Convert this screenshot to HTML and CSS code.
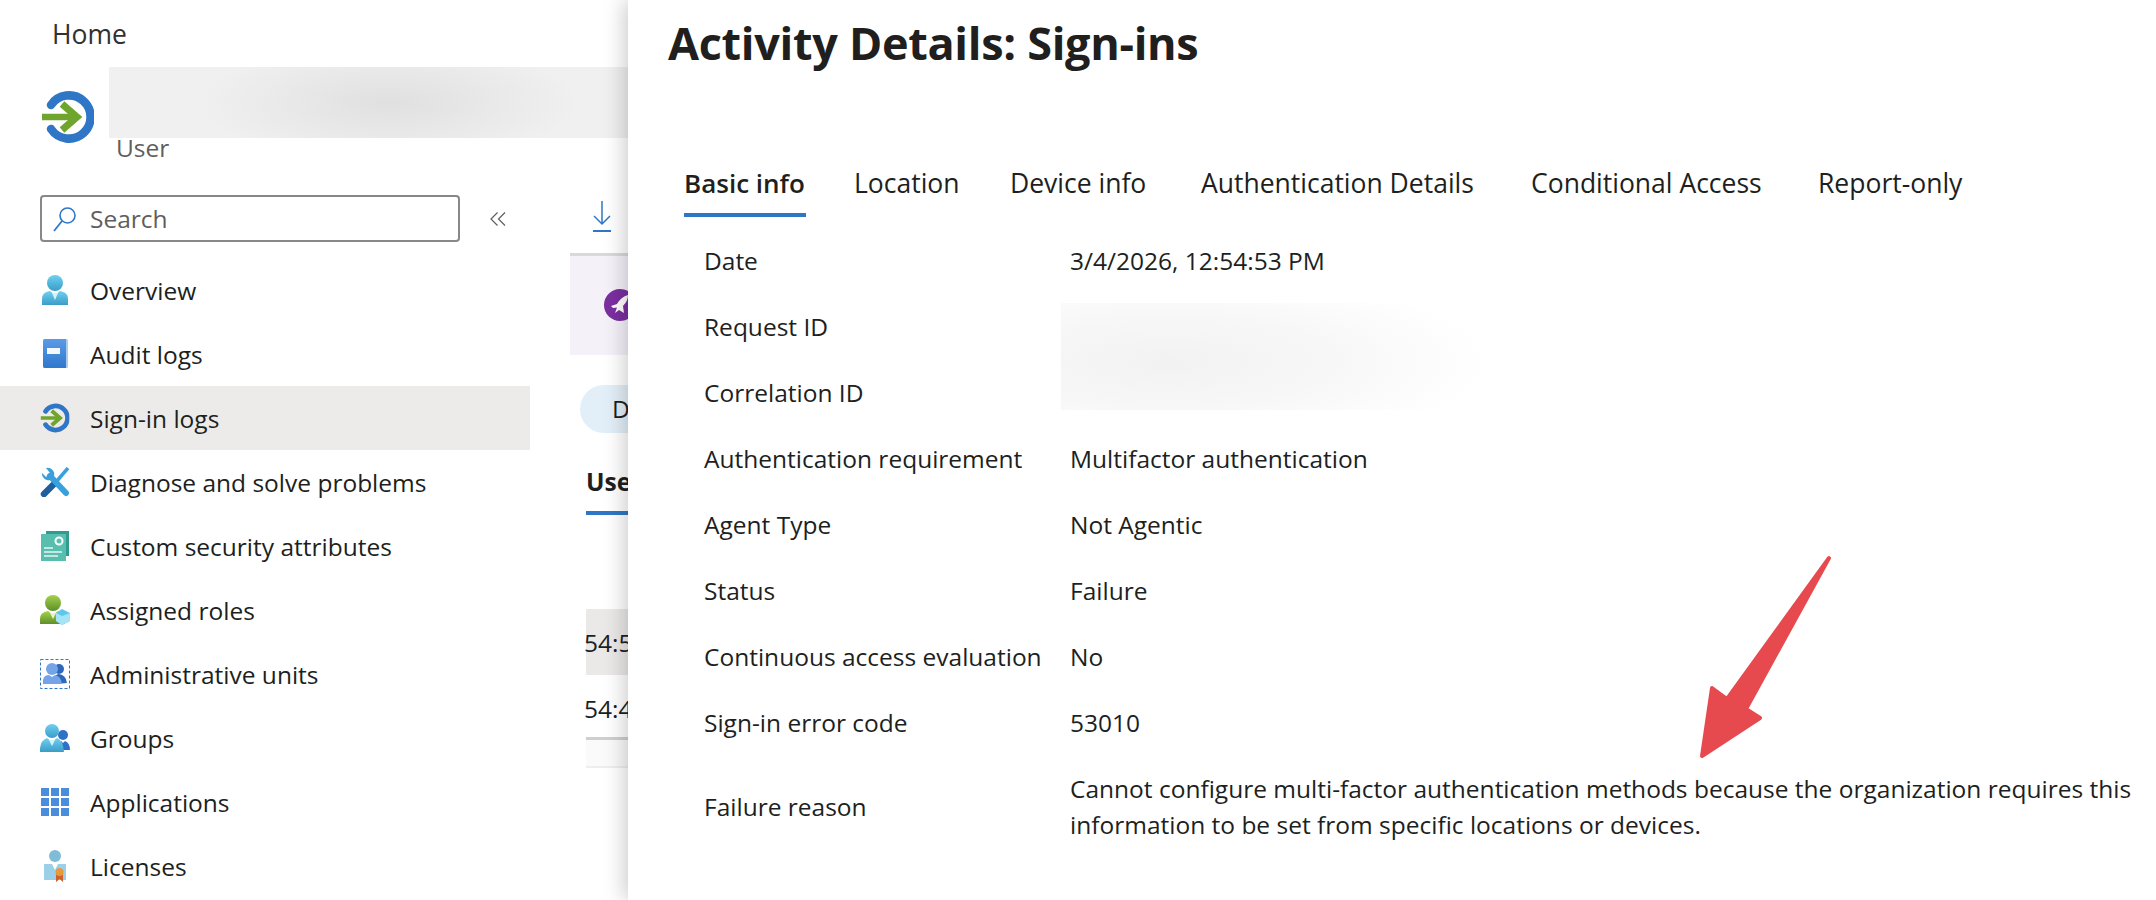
FILE: index.html
```html
<!DOCTYPE html>
<html lang="en">
<head>
  <meta charset="UTF-8">
  <title>Activity Details: Sign-ins</title>
  <link rel="stylesheet" href="styles.css">
</head>
<body>
  <svg class="defs" width="0" height="0">
    <defs>
      <linearGradient id="sky" x1="0" y1="0" x2="0" y2="1"><stop offset="0" stop-color="#6fd0f2"/><stop offset="1" stop-color="#3b9cc6"/></linearGradient>
      <linearGradient id="leaf" x1="0" y1="0" x2="0" y2="1"><stop offset="0" stop-color="#a4d24a"/><stop offset="1" stop-color="#5e8f2a"/></linearGradient>
      <linearGradient id="blue" x1="0" y1="0" x2="0" y2="1"><stop offset="0" stop-color="#5c9ae6"/><stop offset="1" stop-color="#2f78cc"/></linearGradient>
      <symbol id="signin" viewBox="0 0 52 54">
        <path d="M9 15A21.6 21.6 0 1 1 9 39" fill="none" stroke="#2f76c6" stroke-width="8.5" stroke-linecap="round"/>
        <path d="M0 27H35" fill="none" stroke="#6fa52c" stroke-width="6.5"/>
        <path d="M20 14L35 27L20 40" fill="none" stroke="#6fa52c" stroke-width="7"/>
      </symbol>
    </defs>
  </svg>

  <div class="page">
    <aside class="sidebar">
      <div class="home">Home</div>
      <div class="resource">
        <svg class="resource-icon" width="52" height="54"><use href="#signin"/></svg>
        <div class="resource-text">
          <div class="redacted-name"></div>
          <div class="resource-type">User</div>
        </div>
      </div>
      <div class="search-row">
        <div class="search-box">
          <svg width="24" height="26" viewBox="0 0 24 26"><circle cx="14.5" cy="9.5" r="7.5" fill="none" stroke="#2f76c6" stroke-width="1.6"/><path d="M9 15L1 25" stroke="#2f76c6" stroke-width="1.8"/></svg>
          <span>Search</span>
        </div>
        <svg class="collapse" width="16" height="14" viewBox="0 0 16 14"><path d="M7.5 0.5L1 7L7.5 13.5M15 0.5L8.500 7L15 13.5" fill="none" stroke="#605e5c" stroke-width="1.2"/></svg>
      </div>
      <nav class="nav">
        <a class="nav-item">
          <svg width="28" height="30" viewBox="0 0 28 30"><circle cx="14" cy="8" r="8" fill="url(#sky)"/><path d="M1 30V24Q1 17 9 16L14 20L19 16Q27 17 27 24V30Z" fill="url(#sky)"/><path d="M11 18H17L14 25Z" fill="#d8f2fb"/></svg>
          <span>Overview</span>
        </a>
        <a class="nav-item">
          <svg width="28" height="30" viewBox="0 0 28 30"><rect x="2" y="0" width="25" height="29" rx="1.500" fill="#a9cbee"/><path d="M2 2Q2 0 4 0H25V29H4Q2 29 2 27Z" fill="url(#blue)"/><rect x="6" y="9" width="13" height="6" fill="#f4f8fd"/></svg>
          <span>Audit logs</span>
        </a>
        <a class="nav-item selected">
          <svg width="28" height="30" viewBox="0 0 52 54"><use href="#signin"/></svg>
          <span>Sign-in logs</span>
        </a>
        <a class="nav-item">
          <svg width="28" height="30" viewBox="0 0 28 30"><path d="M27 1L15 15" stroke="#3aa0dc" stroke-width="3.500"/><path d="M14 16L3 27" stroke="#1f5f9e" stroke-width="6.500" stroke-linecap="round"/><path d="M9 9L25 26" stroke="#3aa0dc" stroke-width="6" stroke-linecap="round"/><path d="M1 6L5 10L9 6L5 1A6.500 6.500 0 0 1 13 9L9 13A6.500 6.500 0 0 1 1 6Z" fill="#3aa0dc"/></svg>
          <span>Diagnose and solve problems</span>
        </a>
        <a class="nav-item">
          <svg width="28" height="30" viewBox="0 0 28 30"><rect x="5" y="0" width="23" height="25" fill="#2f9c8f"/><rect x="0" y="3" width="25" height="27" fill="#58bfae"/><circle cx="18" cy="10" r="3.500" fill="none" stroke="#fff" stroke-width="2"/><path d="M3 17H12M3 21H21M3 25H17" stroke="#e6f6f3" stroke-width="1.700"/></svg>
          <span>Custom security attributes</span>
        </a>
        <a class="nav-item">
          <svg width="30" height="30" viewBox="0 0 30 30"><circle cx="13" cy="8" r="8" fill="url(#leaf)"/><path d="M0 29V24Q0 17 8 16L13 20L18 16Q24 17 25 24V29Z" fill="url(#leaf)"/><path d="M10 18H16L13 24Z" fill="#e4f3c8"/><path d="M22 14L30 18V26L22 30L16 26V18Z" fill="#5cc8ee"/><path d="M16 18L22 21L30 18V26L22 30L16 26Z" fill="#a5e3f7"/></svg>
          <span>Assigned roles</span>
        </a>
        <a class="nav-item">
          <svg width="30" height="30" viewBox="0 0 30 30"><rect x="0.500" y="0.500" width="29" height="29" fill="none" stroke="#2f76c6" stroke-dasharray="3 2"/><circle cx="19" cy="10" r="5" fill="#2e68b8"/><path d="M15 25V18Q16 15 19 15Q26 16 27 24Z" fill="#2e68b8"/><circle cx="12" cy="10" r="6" fill="#74a3e8"/><path d="M3 25V21Q4 16 9 16L12 18L15 16Q21 17 22 25Z" fill="#74a3e8"/></svg>
          <span>Administrative units</span>
        </a>
        <a class="nav-item">
          <svg width="30" height="30" viewBox="0 0 30 30"><circle cx="23" cy="12" r="5" fill="#2e72c8"/><path d="M17 27Q17 19 21 18L23 20L25 18Q30 20 30 27Z" fill="#2e72c8"/><circle cx="12" cy="8" r="7" fill="url(#sky)"/><path d="M0 29V25Q1 17 7 15L12 19L17 15Q23 17 24 29Z" fill="url(#sky)"/><path d="M9 17H15L12 23Z" fill="#d8f2fb"/></svg>
          <span>Groups</span>
        </a>
        <a class="nav-item">
          <div class="app-grid"><i></i><i></i><i></i><i></i><i></i><i></i><i></i><i></i><i></i></div>
          <span>Applications</span>
        </a>
        <a class="nav-item">
          <svg width="28" height="32" viewBox="0 0 28 32"><circle cx="14" cy="6" r="6" fill="#7fbcd8"/><path d="M3 30V14H11L14 20L17 14H25V30Z" fill="#9ccfe8"/><path d="M15 24V32L18.500 29L22 32V24Z" fill="#d0602a"/><circle cx="18.500" cy="22" r="4" fill="#e79a3c"/></svg>
          <span>Licenses</span>
        </a>
      </nav>
    </aside>

    <div class="content">
      <div class="toolbar">
        <svg width="18" height="31" viewBox="0 0 18 31"><path d="M9 0V23M1 15L9 23L17 15" fill="none" stroke="#2f76c6" stroke-width="1.500"/><path d="M0 30H18" stroke="#2f76c6" stroke-width="2"/></svg>
      </div>
      <div class="banner">
        <svg width="32" height="32" viewBox="0 0 32 32"><circle cx="16" cy="16" r="16" fill="#7b2fa0"/><path d="M24 6Q17 8 13 15L7 17L9 19L13 18.500L11 24L15 21L20 24L19 17Q24 12 24 6Z" fill="#fff"/></svg>
      </div>
      <div class="pill">D</div>
      <div class="sub-tab">Use</div>
      <div class="log-row log-row-active">54:5</div>
      <div class="log-row">54:4</div>
      <div class="table-end"></div>
    </div>

    <main class="panel">
      <h1 class="panel-title">Activity Details: Sign-ins</h1>
      <div class="tabs">
        <span class="tab tab-active">Basic info</span>
        <span class="tab tab-location">Location</span>
        <span class="tab tab-device">Device info</span>
        <span class="tab tab-auth">Authentication Details</span>
        <span class="tab tab-ca">Conditional Access</span>
        <span class="tab">Report-only</span>
      </div>
      <div class="details">
        <div class="label">Date</div>
        <div class="value">3/4/2026, 12:54:53 PM</div>
        <div class="label">Request ID</div>
        <div class="value-redacted"></div>
        <div class="label">Correlation ID</div>
        <div class="label">Authentication requirement</div>
        <div class="value">Multifactor authentication</div>
        <div class="label">Agent Type</div>
        <div class="value">Not Agentic</div>
        <div class="label">Status</div>
        <div class="value">Failure</div>
        <div class="label">Continuous access evaluation</div>
        <div class="value">No</div>
        <div class="label">Sign-in error code</div>
        <div class="value">53010</div>
        <div class="label label-tall">Failure reason</div>
        <div class="value value-tall">Cannot configure multi-factor authentication methods because the organization requires this information to be set from specific locations or devices.</div>
      </div>
    </main>

    <svg class="annotation" width="146" height="210" viewBox="0 0 146 210">
      <path d="M138 5L55 156L69 165L11 203L21 135L36 146Z" fill="#e64a4f" stroke="#e64a4f" stroke-width="4" stroke-linejoin="round"/>
    </svg>
  </div>
</body>
</html>
```

FILE: styles.css
```css
* {
  box-sizing: border-box;
}
html, body {
  margin: 0;
  height: 900px;
  overflow: hidden;
  background: #fff;
}
body {
  font-family: "Open Sans", "Noto Sans", sans-serif;
  font-size: 24.5px;
  color: #201f1e;
}
.defs {
  position: absolute;
}
.page {
  display: flex;
  height: 900px;
  position: relative;
  overflow: hidden;
}

/* left blade menu */
.sidebar {
  width: 530px;
  flex-shrink: 0;
  position: relative;
  z-index: 1;
}
.home {
  height: 67px;
  line-height: 69px;
  padding-left: 52px;
  font-size: 26.5px;
  color: #323130;
}
.resource {
  display: flex;
  height: 91px;
  padding-left: 42px;
}
.resource-icon {
  margin-top: 23px;
  flex-shrink: 0;
}
.resource-text {
  margin-left: 15px;
}
.redacted-name {
  width: 519px;
  height: 71px;
  background: radial-gradient(ellipse 190px 60px at 54% 50%, #e0e0e0, #f0f0f0 100%);
}
.resource-type {
  padding-left: 7px;
  line-height: 20px;
  color: #605e5c;
}
.search-row {
  display: flex;
  align-items: center;
  margin-top: 37px;
  padding-left: 40px;
}
.search-box {
  display: flex;
  align-items: center;
  gap: 13px;
  width: 420px;
  height: 47px;
  padding-left: 11px;
  border: 2px solid #8a8886;
  border-radius: 4px;
  color: #605e5c;
}
.collapse {
  margin-left: 30px;
}
.nav {
  margin-top: 16px;
}
.nav-item {
  display: flex;
  align-items: center;
  height: 64px;
  padding-left: 40px;
}
.nav-item svg, .app-grid {
  width: 30px;
  flex-shrink: 0;
}
.nav-item span {
  margin-left: 20px;
}
.selected {
  background: #edebe9;
}
.app-grid {
  display: grid;
  grid-template-columns: repeat(3, 1fr);
  gap: 2px;
  height: 28px;
  width: 28px;
  margin-left: 1px;
  margin-right: 1px;
  background: #fff;
}
.app-grid i {
  background: #4a8ddc;
}

/* page behind the panel */
.content {
  width: 98px;
  flex-shrink: 0;
  overflow: hidden;
  padding-top: 201px;
}
.toolbar {
  height: 52px;
  padding-left: 63px;
}
.banner {
  width: 58px;
  height: 102px;
  margin-left: 40px;
  border-top: 3px solid #d9d9d9;
  background: #f5f1f9;
  padding: 33px 0 0 34px;
  overflow: hidden;
}
.pill {
  width: 80px;
  height: 48px;
  line-height: 48px;
  margin: 30px 0 0 50px;
  padding-left: 32px;
  border-radius: 24px 0 0 24px;
  background: #e3eff8;
}
.sub-tab {
  width: 60px;
  height: 82px;
  margin-left: 56px;
  padding-top: 26px;
  line-height: 46px;
  font-weight: 700;
  border-bottom: 4px solid #2f76c6;
}
.log-row {
  height: 66px;
  line-height: 68px;
  margin-left: 56px;
  text-indent: -2px;
  white-space: nowrap;
}
.log-row-active {
  margin-top: 94px;
  background: #ebe9e8;
}
.table-end {
  height: 31px;
  margin: -4px 0 0 56px;
  border-top: 3px solid #cfcfcf;
  border-bottom: 2px solid #eee;
  background: #fafafa;
}

/* details panel */
.panel {
  flex: 1;
  position: relative;
  z-index: 2;
  padding-left: 40px;
  background: #fff;
  box-shadow: -4px 0 20px rgba(0, 0, 0, 0.2);
}
.panel-title {
  margin: 0;
  height: 86px;
  line-height: 86px;
  font-size: 45px;
  font-weight: 700;
  letter-spacing: -0.3px;
}
.tabs {
  display: flex;
  margin-top: 67px;
  padding-left: 16px;
  font-size: 26.5px;
}
.tab {
  height: 64px;
  line-height: 60px;
  white-space: nowrap;
}
.tab-active {
  width: 122px;
  margin-right: 48px;
  font-weight: 600;
  font-size: 26px;
  border-bottom: 4px solid #2f76c6;
}
.tab-location {
  width: 156px;
}
.tab-device {
  width: 191px;
}
.tab-auth {
  width: 330px;
}
.tab-ca {
  width: 287px;
}
.details {
  display: grid;
  grid-template-columns: 365px 1px 1fr;
  grid-auto-rows: 66px;
  margin-top: 11px;
  padding-left: 36px;
  padding-right: 12px;
}
.label {
  grid-column: 1;
  line-height: 66px;
  white-space: nowrap;
}
.value {
  grid-column: 3;
  line-height: 66px;
}
.value-redacted {
  grid-column: 3;
  grid-row: span 2;
  width: 430px;
  height: 107px;
  margin: 9px 0 0 -9px;
  background: radial-gradient(ellipse 320px 90px at 25% 55%, #f2f2f2, #f7f7f7 50%, rgba(255, 255, 255, 0) 100%);
}
.label-tall {
  margin-top: 18px;
}
.value-tall {
  line-height: 36px;
  margin-top: 15px;
}

/* red arrow drawn over the screenshot */
.annotation {
  position: absolute;
  left: 1691px;
  top: 553px;
  z-index: 3;
}
```
